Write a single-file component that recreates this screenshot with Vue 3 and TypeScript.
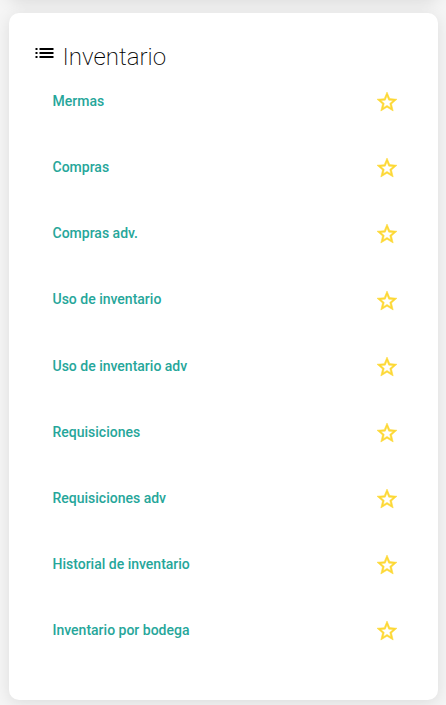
<script setup lang="ts">
const items: string[] = [
  'Mermas',
  'Compras',
  'Compras adv.',
  'Uso de inventario',
  'Uso de inventario adv',
  'Requisiciones',
  'Requisiciones adv',
  'Historial de inventario',
  'Inventario por bodega',
]
</script>

<template>
  <main class="page">
    <section class="card previous"></section>
    <section class="card">
      <h2 class="title">
        <svg class="list-icon" viewBox="0.5 0 24 24" aria-hidden="true">
          <path d="M3 13h2v-2H3v2zm0 4h2v-2H3v2zm0-8h2V7H3v2zm4 4h14v-2H7v2zm0 4h14v-2H7v2zM7 7v2h14V7H7z" />
        </svg>
        <span>Inventario</span>
      </h2>
      <ul class="items">
        <li v-for="item in items" :key="item" class="item">
          <a class="link">{{ item }}</a>
          <svg class="star" viewBox="0 0 24 24" aria-hidden="true">
            <path d="M22 9.24l-7.19-.62L12 2 9.19 8.63 2 9.24l5.46 4.73L5.82 21 12 17.27 18.18 21l-1.63-7.03L22 9.24zM12 15.4l-3.76 2.27 1-4.28-3.32-2.88 4.38-.38L12 6.1l1.71 4.04 4.38.38-3.32 2.88 1 4.28L12 15.4z" />
          </svg>
        </li>
      </ul>
    </section>
  </main>
</template>

<style>
body {
  background: #f5f5f5;
}
</style>

<style scoped>
.page {
  box-sizing: border-box;
  height: 705px;
  padding: 0 8px 0 9px;
  overflow: hidden;
  font-family: Roboto, sans-serif;
}
.card {
  box-sizing: border-box;
  height: 687px;
  padding: 28px 39px 0 23.5px;
  border-radius: 10px;
  background: #fff;
  box-shadow: 0 3px 16px rgba(0, 0, 0, 0.1);
}
.card.previous {
  height: 30px;
  margin: -30px 0 13px;
  padding: 0;
}
.title {
  display: flex;
  height: 32px;
  margin: 0 0 13px;
  font-size: 24.15px;
  line-height: 32px;
  font-weight: 200;
  color: #000;
}
.list-icon {
  width: 24px;
  height: 24px;
  margin-right: 6px;
  fill: #000;
}
.items {
  margin: 0;
  padding: 0 0 0 20px;
  list-style: none;
}
.item {
  display: flex;
  justify-content: space-between;
  height: 66.13px;
  padding-top: 4px;
  box-sizing: border-box;
}
.link {
  font-size: 14px;
  line-height: 22px;
  font-weight: 500;
  color: #26a69a;
}
.star {
  width: 24px;
  height: 24px;
  margin-top: 0.17px;
  fill: #fdd835;
  stroke: #fdd835;
  stroke-width: 0.5;
}
</style>
